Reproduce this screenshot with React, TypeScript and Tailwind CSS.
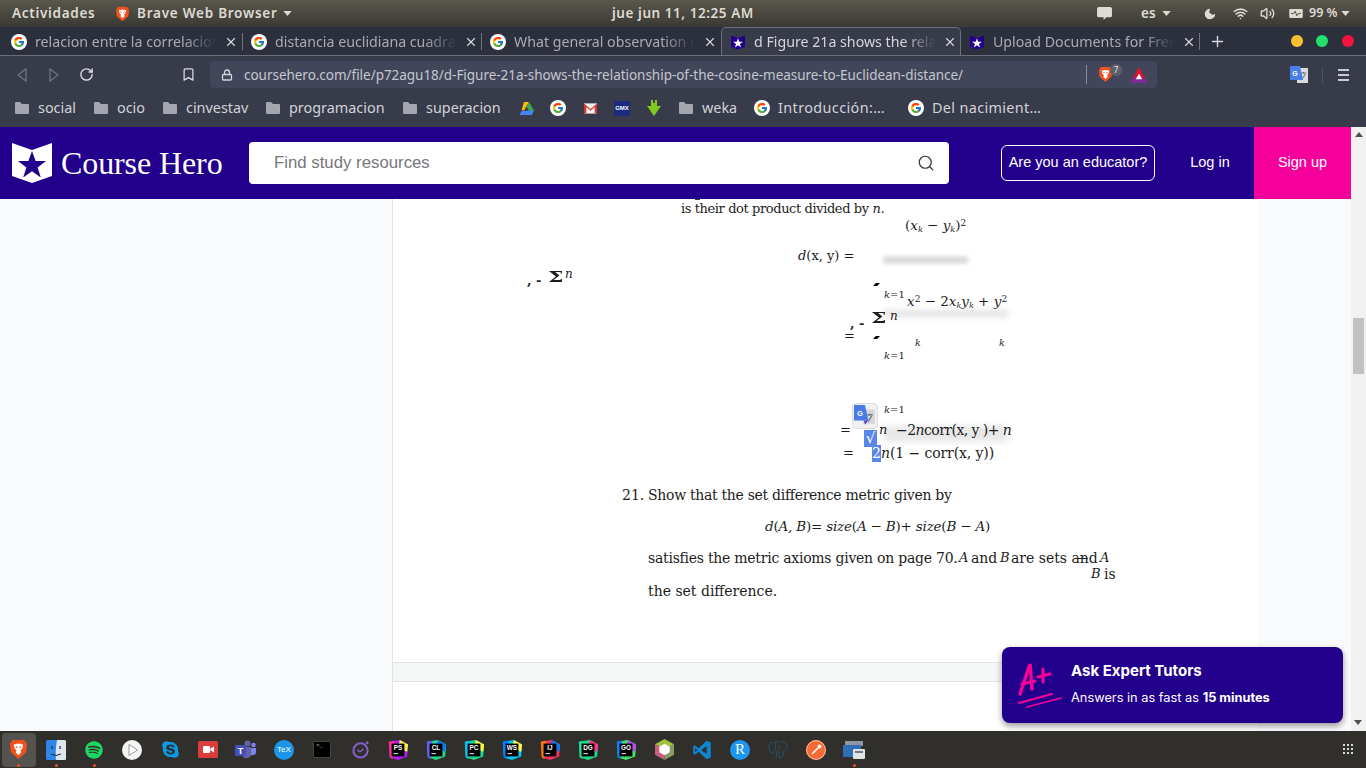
import { ReactNode } from 'react';
import { FcGoogle } from 'react-icons/fc';
import { FaSkype, FaSpotify } from 'react-icons/fa';
import {
  Bookmark,
  Lock,
  Moon,
  Plus,
  RotateCw,
  Search,
  Volume2,
  Wifi,
  X,
} from 'lucide-react';

const ui = "font-['Noto_Sans',sans-serif]";
const serif = "font-['DejaVu_Serif',serif]";

function GoogleIcon() {
  return (
    <span className="flex h-4 w-4 shrink-0 items-center justify-center rounded-full bg-white">
      <FcGoogle className="h-3 w-3" />
    </span>
  );
}

function ShieldMark({ className, star }: { className: string; star: string }) {
  return (
    <svg viewBox="0 0 40 40" className={className}>
      <path d="M0 0 L20 7 L40 0 V33 L20 40 L0 33 Z" fill="currentColor" />
      <path
        d="M20 8 L23.6 18 L34 18 L25.6 24.4 L28.8 34.5 L20 28.2 L11.2 34.5 L14.4 24.4 L6 18 L16.4 18 Z"
        fill={star}
      />
    </svg>
  );
}

function BraveIcon({ size }: { size: string }) {
  return (
    <svg viewBox="0 0 20 22" className={size}>
      <path d="M4 1 H16 L19 5 L18 14 L10 21 L2 14 L1 5 Z" fill="#f0521f" />
      <path
        d="M5 6 L8 5 H12 L15 6 L14 10 L12 12 L13 14 L10 17 L7 14 L8 12 L6 10 Z"
        fill="#fff"
      />
      <path d="M7 8 L9 9 M13 8 L11 9" stroke="#f0521f" strokeWidth="1.2" />
    </svg>
  );
}

function Folder() {
  return (
    <svg viewBox="0 0 14 12" className="h-3 w-3.5 shrink-0">
      <path d="M0 1 Q0 0 1 0 H5 L7 2 H13 Q14 2 14 3 V11 Q14 12 13 12 H1 Q0 12 0 11 Z" fill="#a3a6af" />
    </svg>
  );
}

function Tab({
  title,
  icon,
  w,
  active,
  sep,
}: {
  title: string;
  icon: ReactNode;
  w: string;
  active?: boolean;
  sep?: boolean;
}) {
  return (
    <div
      className={`relative flex h-full shrink-0 items-center pl-[8px] ${w} ${
        active
          ? 'z-10 -mb-px rounded-t-[5px] border border-b-0 border-[#6c6f7a] bg-[#383b4a] pt-[1px] text-[#d5d6da]'
          : 'pt-[2px] text-[#a9abb3]'
      }`}
    >
      <span className="flex w-[16px] shrink-0 justify-center">{icon}</span>
      <span className="ml-[8px] w-[187px] overflow-hidden whitespace-nowrap text-[14.2px] [mask-image:linear-gradient(to_right,black_80%,transparent_97%)]">
        {title}
      </span>
      <X className="ml-[2px] h-[14px] w-[14px] shrink-0 text-[#d5d6da]" strokeWidth={2} />
      {sep && <span className="absolute right-0 top-[6px] h-[17px] w-px bg-[#70727c]" />}
    </div>
  );
}

function Mark({ to, text }: { to: string; text: string }) {
  return (
    <div className={`flex shrink-0 items-center gap-[9px] ${to}`}>
      <Folder />
      <span className="whitespace-nowrap">{text}</span>
    </div>
  );
}

function BarIcon({ children, w }: { children: ReactNode; w: string }) {
  return <span className={`flex shrink-0 items-center justify-center ${w}`}>{children}</span>;
}

function Jet({ label, a, b, c }: { label: string; a: string; b: string; c: string }) {
  return (
    <svg viewBox="0 0 24 24" className="h-[22px] w-[22px]">
      <polygon points="2,3 14,1 23,6 22,19 12,23 3,20" fill={a} />
      <polygon points="14,1 23,6 22,14 12,10" fill={b} />
      <polygon points="2,3 8,2 6,22 3,20" fill={c} />
      <rect x="5" y="5" width="14" height="14" fill="#000" />
      <text x="12" y="12.5" textAnchor="middle" fontSize="7" fontWeight="700" fill="#fff" fontFamily="Liberation Sans">
        {label}
      </text>
      <rect x="7" y="15.5" width="5" height="1" fill="#fff" />
    </svg>
  );
}

const dockIcons: { key: string; dot?: boolean; node: ReactNode }[] = [
  { key: 'brave', dot: true, node: <BraveIcon size="h-[21px] w-[19px]" /> },
  {
    key: 'finder',
    dot: true,
    node: (
      <svg viewBox="0 0 20 20" className="h-[20px] w-[20px]">
        <rect width="20" height="20" rx="1.5" fill="#2f86e6" />
        <path d="M11 0 H18.5 Q20 0 20 1.5 V18.5 Q20 20 18.5 20 H10 Q9 12 11 0" fill="#dfe6ee" />
        <path d="M5 14 Q10 17 15 14" stroke="#1b2a44" fill="none" />
        <path d="M6 6 V9 M14 6 V9" stroke="#1b2a44" strokeWidth="1.2" />
      </svg>
    ),
  },
  { key: 'spotify', dot: true, node: <FaSpotify className="h-[18px] w-[18px] text-[#1ed760]" /> },
  {
    key: 'play',
    node: (
      <svg viewBox="0 0 20 20" className="h-[20px] w-[20px]">
        <circle cx="10" cy="10" r="10" fill="#f4f4f4" />
        <path d="M7 4.5 L15.5 10 L7 15.5 Z" fill="#fff" stroke="#9a9a9a" strokeWidth="1" />
      </svg>
    ),
  },
  {
    key: 'skype',
    node: <FaSkype className="h-[19px] w-[19px] text-[#0a9be6]" />,
  },
  {
    key: 'video',
    node: (
      <svg viewBox="0 0 20 17" className="h-[17px] w-[20px]">
        <rect width="20" height="17" rx="1.5" fill="#dd3c3c" />
        <rect x="5" y="5" width="7" height="7" rx="1" fill="#fff" />
        <path d="M12 8 L16 5.5 V11.5 L12 9 Z" fill="#fff" />
      </svg>
    ),
  },
  {
    key: 'teams',
    node: (
      <svg viewBox="0 0 22 20" className="h-[20px] w-[22px]">
        <circle cx="12.5" cy="3.5" r="3" fill="#6264a7" />
        <circle cx="18.5" cy="5" r="2.3" fill="#7b83eb" />
        <path d="M7 7 H16 V16 Q12 20 8 17 Z" fill="#6264a7" />
        <path d="M16 8 H21 V13 Q20 16 16 15 Z" fill="#7b83eb" />
        <rect x="0" y="5" width="11" height="11" rx="1" fill="#464eb8" />
        <text x="5.5" y="14" textAnchor="middle" fontSize="9" fontWeight="700" fill="#fff" fontFamily="Liberation Sans">
          T
        </text>
      </svg>
    ),
  },
  {
    key: 'tex',
    node: (
      <span className="flex h-[20px] w-[20px] items-center justify-center rounded-full bg-[#1e96e8] font-['Liberation_Sans',sans-serif] text-[8px] text-white">
        TeX
      </span>
    ),
  },
  {
    key: 'term',
    node: (
      <span className="flex h-[17px] w-[18px] items-start rounded-[1px] border border-[#444] bg-black pl-[2px] font-['Liberation_Mono',monospace] text-[6px] leading-[8px] text-[#ccc]">
        &gt;_
      </span>
    ),
  },
  {
    key: 'ring',
    node: (
      <svg viewBox="0 0 20 20" className="h-[19px] w-[19px]">
        <circle cx="10" cy="11" r="7.5" fill="none" stroke="#8360c9" strokeWidth="2.2" />
        <path d="M7 10 Q9 15 13 9" fill="none" stroke="#8360c9" strokeWidth="1.6" />
        <circle cx="17" cy="3" r="1.6" fill="#8360c9" />
      </svg>
    ),
  },
  { key: 'ps', node: <Jet label="PS" a="#af1df5" b="#fcf84a" c="#ff318c" /> },
  { key: 'cl', node: <Jet label="CL" a="#21d789" b="#087cfa" c="#6b57ff" /> },
  { key: 'pc', node: <Jet label="PC" a="#21d789" b="#fcf84a" c="#07c3f2" /> },
  { key: 'ws', node: <Jet label="WS" a="#07c3f2" b="#fcf84a" c="#087cfa" /> },
  { key: 'ij', node: <Jet label="IJ" a="#fe315d" b="#087cfa" c="#f97a12" /> },
  { key: 'dg', node: <Jet label="DG" a="#21d789" b="#ff318c" c="#22d88f" /> },
  { key: 'go', node: <Jet label="GO" a="#3bea62" b="#b74af7" c="#087cfa" /> },
  {
    key: 'cube',
    node: (
      <svg viewBox="0 0 20 22" className="h-[21px] w-[19px]">
        <polygon points="10,0 20,5.5 10,11 0,5.5" fill="#a2c13a" />
        <polygon points="0,5.5 10,11 10,22 0,16.5" fill="#c85f7f" />
        <polygon points="20,5.5 10,11 10,22 20,16.5" fill="#8a9b6a" />
        <polygon points="10,5 15.5,8 15.5,14 10,17 4.5,14 4.5,8" fill="#fff" />
      </svg>
    ),
  },
  {
    key: 'vscode',
    node: (
      <svg viewBox="0 0 24 24" className="h-[20px] w-[20px]">
        <path
          d="M17.6 1 L8 10 L3.5 6.4 L1.5 7.4 V16.6 L3.5 17.6 L8 14 L17.6 23 L22.5 21 V3 Z M17.6 7.2 V16.8 L11 12 Z M3.8 9.4 L6.2 12 L3.8 14.6 Z"
          fill="#0f86d0"
          fillRule="evenodd"
        />
      </svg>
    ),
  },
  {
    key: 'r',
    node: (
      <span className="flex h-[20px] w-[20px] items-center justify-center rounded-full bg-[#1e96f0] font-['Liberation_Serif',serif] text-[15px] leading-none text-white">
        R
      </span>
    ),
  },
  {
    key: 'pg',
    node: (
      <svg viewBox="0 0 20 20" className="h-[20px] w-[20px]" fill="none" stroke="#2a5674" strokeWidth="0.9">
        <path d="M5 2 Q1 2 1 6 Q1 11 4 14 Q6 13 6 10 M6 3 Q9 1 12 2 M13 2 Q19 1 19 6 Q19 10 15 12 V16 Q13 19 11 17 V11" />
        <path d="M8 3 Q6 7 8 10 Q9 14 8 18 M12 5 Q10 7 11 10" />
      </svg>
    ),
  },
  {
    key: 'postman',
    node: (
      <svg viewBox="0 0 20 20" className="h-[20px] w-[20px]">
        <circle cx="10" cy="10" r="10" fill="#f76935" />
        <circle cx="10" cy="10" r="9.4" fill="none" stroke="#f7d3c0" strokeWidth="0.8" />
        <path d="M6 14 L12 8" stroke="#fff" strokeWidth="1.6" />
        <circle cx="13.5" cy="6.5" r="2" fill="#fff" />
      </svg>
    ),
  },
  {
    key: 'files',
    dot: true,
    node: (
      <svg viewBox="0 0 22 20" className="h-[20px] w-[22px]">
        <rect x="2" y="1" width="18" height="5" fill="#8d97a3" />
        <rect x="0" y="5" width="18" height="12" rx="1" fill="#2e6fb7" />
        <rect x="10" y="9" width="12" height="10" rx="1" fill="#dfe3e6" />
        <rect x="12" y="11" width="8" height="2" fill="#6f7880" />
      </svg>
    ),
  },
];

function T({ c, children }: { c: string; children: ReactNode }) {
  return <div className={`absolute whitespace-nowrap leading-4 ${c}`}>{children}</div>;
}

function Sigma({ c }: { c: string }) {
  return <T c={`origin-left scale-x-[1.45] text-[15px] font-bold ${c}`}>Σ</T>;
}

function Tick({ c }: { c: string }) {
  return <span className={`absolute h-[3px] w-[7px] bg-black [clip-path:polygon(40%_0,100%_0,60%_100%,0_100%)] ${c}`} />;
}

export default function App() {
  return (
    <div className="relative flex h-[768px] w-[1366px] flex-col overflow-hidden bg-white">
      {/* Ubuntu top bar */}
      <div className={`flex h-[27px] shrink-0 items-center bg-gradient-to-b from-[#5a574d] to-[#3a3934] text-[13.5px] font-semibold text-[#dedbd2] ${ui}`}>
        <span className="ml-3 w-[103px] tracking-[0.7px]">Actividades</span>
        <BraveIcon size="h-[16px] w-[15px]" />
        <span className="ml-[7px] w-[146px] whitespace-nowrap tracking-[0.75px]">Brave Web Browser</span>
        <svg viewBox="0 0 10 6" className="h-[5px] w-[9px]"><path d="M0 0 H10 L5 6 Z" fill="#dedbd2" /></svg>
        <span className="ml-[320px] w-[482px] tracking-[0.55px]">jue jun 11, 12:25 AM</span>
        <svg viewBox="0 0 16 15" className="ml-[3px] h-[14px] w-[15px]">
          <path d="M2 0 H14 Q16 0 16 2 V9 Q16 11 14 11 H10 L7 14 V11 H2 Q0 11 0 9 V2 Q0 0 2 0" fill="#dedbd2" />
        </svg>
        <span className="ml-[29px] w-[21px]">es</span>
        <svg viewBox="0 0 10 6" className="h-[5px] w-[9px]"><path d="M0 0 H10 L5 6 Z" fill="#dedbd2" /></svg>
        <Moon className="ml-[32px] h-[14px] w-[14px]" fill="#dedbd2" strokeWidth={0} />
        <Wifi className="ml-[16px] h-[15px] w-[15px]" strokeWidth={2.6} />
        <Volume2 className="ml-[12px] h-[15px] w-[15px]" strokeWidth={2.2} />
        <svg viewBox="0 0 15 10" className="ml-[14px] h-[9px] w-[14px]">
          <rect width="15" height="10" rx="1.5" fill="#dedbd2" />
          <path d="M2 5 H5 L6.5 2.5 L8.5 7.5 L10 5 H13" stroke="#45443e" fill="none" />
        </svg>
        <span className="ml-[6px] w-[32px] whitespace-nowrap text-[12.5px]">99 %</span>
        <svg viewBox="0 0 10 6" className="h-[5px] w-[9px]"><path d="M0 0 H10 L5 6 Z" fill="#dedbd2" /></svg>
      </div>

      {/* Tab strip */}
      <div className={`relative flex h-[29px] shrink-0 items-stretch border-b border-[#6c6f7a] bg-[#2c303d] pl-[3px] ${ui}`}>
        <Tab w="w-[240px]" title="relacion entre la correlacion" icon={<GoogleIcon />} sep />
        <Tab w="w-[239px]" title="distancia euclidiana cuadrada" icon={<GoogleIcon />} sep />
        <Tab w="w-[239px]" title="What general observation can" icon={<GoogleIcon />} />
        <Tab
          w="w-[240px]"
          title="d Figure 21a shows the relationship"
          active
          icon={<ShieldMark className="h-[15px] w-[14px] text-[#22008b]" star="#fff" />}
        />
        <Tab
          w="w-[239px]"
          title="Upload Documents for Free"
          sep
          icon={<ShieldMark className="h-[15px] w-[14px] text-[#22008b]" star="#fff" />}
        />
        <Plus className="ml-[9px] h-[17px] w-[17px] self-center text-[#d5d6da]" strokeWidth={2} />
        <span className="ml-[65px] h-3 w-3 self-center rounded-full bg-[#fbc02d]" />
        <span className="ml-[13px] h-3 w-3 self-center rounded-full bg-[#1fe36b]" />
        <span className="ml-[14px] h-3 w-3 self-center rounded-full bg-[#f5133f]" />
      </div>

      {/* Toolbar */}
      <div className={`flex h-[37px] shrink-0 items-center bg-[#383b4a] ${ui}`}>
        <svg viewBox="0 0 10 14" className="ml-[17px] h-[14px] w-[10px]" fill="none" stroke="#6f7280" strokeWidth="1.3">
          <path d="M9 1 V13 L1 7 Z" />
        </svg>
        <svg viewBox="0 0 10 14" className="ml-[22px] h-[14px] w-[10px]" fill="none" stroke="#6f7280" strokeWidth="1.3">
          <path d="M1 1 V13 L9 7 Z" />
        </svg>
        <RotateCw className="ml-[20px] h-[15px] w-[15px] text-[#dcdde1]" strokeWidth={2.2} />
        <Bookmark className="ml-[87px] h-[15px] w-[15px] text-[#dcdde1]" strokeWidth={2} />
        <div className="ml-[14px] flex h-[27px] w-[947px] items-center rounded-[4px] bg-[#42465a]">
          <Lock className="ml-[11px] h-[12px] w-[12px] text-[#d5d6da]" strokeWidth={2.6} />
          <span className="ml-[11px] w-[842px] whitespace-nowrap pt-[2px] text-[13.5px] tracking-[-0.03px] text-[#c5c7ce]">
            coursehero.com/file/p72agu18/d-Figure-21a-shows-the-relationship-of-the-cosine-measure-to-Euclidean-distance/
          </span>
          <span className="h-[19px] w-px bg-[#8c8e98]" />
          <span className="relative ml-[11px] flex">
            <BraveIcon size="h-[17px] w-[15px]" />
            <span className="absolute -right-[9px] -top-[2px] flex h-[12px] w-[12px] items-center justify-center rounded-full bg-[#5d5f6c] text-[8px] text-[#e6e6e6]">
              7
            </span>
          </span>
          <svg viewBox="0 0 16 15" className="ml-[17px] h-[16px] w-[18px]">
            <polygon points="8,0 16,15 0,15" fill="#e01030" />
            <polygon points="0,15 16,15 12.5,10 3.5,10" fill="#7c2a9c" />
            <polygon points="8,6 11,11.5 5,11.5" fill="#fff" />
          </svg>
        </div>
        <svg viewBox="0 0 18 17" className="ml-[133px] h-[17px] w-[18px]">
          <rect x="7" y="2" width="11" height="15" fill="#d9dbde" />
          <path d="M11 7 H16 M13.5 6 V7 M12 13 L15.5 8" stroke="#666" />
          <polygon points="0,0 10,0 13,14 0,14" fill="#4b7fe8" />
          <text x="5" y="10" textAnchor="middle" fontSize="7" fontWeight="700" fill="#fff" fontFamily="Liberation Sans">
            G
          </text>
        </svg>
        <span className="ml-[14px] h-[16px] w-px bg-[#50535f]" />
        <div className="ml-[15px] flex w-[11px] flex-col gap-[3px]">
          <span className="h-[2px] bg-[#c9cad0]" />
          <span className="h-[2px] bg-[#c9cad0]" />
          <span className="h-[2px] bg-[#c9cad0]" />
        </div>
      </div>

      {/* Bookmarks */}
      <div className={`flex h-[34px] shrink-0 items-center bg-[#383b4a] pb-[4px] pl-[15px] text-[14.4px] text-[#d2d3d8] ${ui}`}>
        <Mark to="w-[79px]" text="social" />
        <Mark to="w-[69px]" text="ocio" />
        <Mark to="w-[103px]" text="cinvestav" />
        <Mark to="w-[137px]" text="programacion" />
        <Mark to="w-[115px]" text="superacion" />
        <BarIcon w="w-[16px]">
          <svg viewBox="0 0 16 14" className="h-[13px] w-[15px]">
            <polygon points="5.3,0 10.7,0 5.5,9 2.7,9" fill="#fbbc04" />
            <polygon points="10.7,0 16,9.2 13.3,14 8,5" fill="#34a853" />
            <polygon points="3,9.4 16,9.4 13.3,14 0.4,14" fill="#4285f4" />
          </svg>
        </BarIcon>
        <BarIcon w="w-[48px]"><GoogleIcon /></BarIcon>
        <BarIcon w="w-[16px]">
          <svg viewBox="0 0 14 11" className="h-[11px] w-[13px]">
            <rect width="14" height="11" fill="#f2f2f2" />
            <path d="M0 0 L7 6 L14 0 V11 H11.5 V4 L7 8 L2.5 4 V11 H0 Z" fill="#d9362b" />
          </svg>
        </BarIcon>
        <BarIcon w="w-[48px]">
          <span className="flex h-[15px] w-[16px] items-center justify-center bg-[#1c2a80] font-['Liberation_Sans',sans-serif] text-[6px] font-bold text-white">
            GMX
          </span>
        </BarIcon>
        <BarIcon w="w-[16px]">
          <svg viewBox="0 0 14 16" className="h-[16px] w-[14px]">
            <path d="M4 0 H6 V3 H8 V0 H10 V6 H14 L7 16 L0 6 H4 Z" fill="#82c91e" />
          </svg>
        </BarIcon>
        <div className="ml-[17px] flex w-[75px] shrink-0 items-center gap-[9px]">
          <Folder />
          <span>weka</span>
        </div>
        <GoogleIcon />
        <span className="ml-[8px] w-[130px] shrink-0 whitespace-nowrap tracking-[0.4px]">Introducción:…</span>
        <GoogleIcon />
        <span className="ml-[8px] whitespace-nowrap tracking-[0.35px]">Del nacimient…</span>
      </div>

      {/* Course Hero header */}
      <div className="flex h-[72px] shrink-0 bg-[#f1f1f1] font-['Liberation_Sans',sans-serif]">
        <div className="flex w-[1351px] shrink-0 items-center bg-[#22008b]">
          <ShieldMark className="ml-3 h-10 w-10 text-white" star="#22008b" />
          <span className="ml-[9px] w-[188px] font-['Liberation_Serif',serif] text-[32px] leading-none tracking-[-0.1px] text-white">
            Course Hero
          </span>
          <div className="flex h-[42px] w-[700px] items-center justify-between rounded-[4px] bg-white pl-[25px] pr-[14px]">
            <span className="text-[16.8px] text-[#77777c]">Find study resources</span>
            <Search className="h-[18px] w-[18px] text-[#33333d]" strokeWidth={1.6} />
          </div>
          <button className="ml-[52px] flex h-9 w-[154px] items-center justify-center rounded-md border border-white text-[14.5px] text-white">
            Are you an educator?
          </button>
          <span className="w-[99px] pl-[11px] text-center text-[14.5px] text-white">Log in</span>
          <span className="flex h-full flex-1 items-center justify-center bg-[#f5009a] text-[14.5px] text-white">
            Sign up
          </span>
        </div>
        <div className="flex flex-1 justify-center pt-[5px]">
          <svg viewBox="0 0 8 5" className="h-[5px] w-[8px]"><path d="M4 0 L8 5 H0 Z" fill="#505050" /></svg>
        </div>
      </div>

      {/* Page */}
      <div className="flex min-h-0 flex-1">
        <div className="w-[392px] shrink-0 bg-[#f9fafc]" />
        <div className="flex w-[866px] shrink-0 flex-col border-l border-[#e2e3e5] bg-[#f5f6f6]">
          <div className={`relative h-[464px] shrink-0 overflow-hidden border-b border-[#e2e3e5] bg-white text-[#1c1c1c] ${serif}`}>
            <span className="absolute left-[302px] -top-[1px] h-[2px] w-[5px] bg-[#333]" />
            <T c="left-[288px] top-[2px] text-[13px] tracking-[-0.4px]">is their dot product divided by <i>n</i>.</T>
            <T c="left-[512px] top-[18px] text-[13.5px]">(<i>x<sub className="text-[8px]">k</sub></i> − <i>y<sub className="text-[8px]">k</sub></i>)<sup className="text-[9px]">2</sup></T>
            <T c="left-[405px] top-[49px] text-[13px]"><i>d</i>(x, y) =</T>
            <div className="absolute left-[490px] top-[58px] h-[6px] w-[85px] bg-[#d0d0d0] blur-[2.5px]" />

            <T c="left-[134px] top-[74px] text-[13px] font-bold">, -</T>
            <Sigma c="left-[155px] top-[70px]" />
            <T c="left-[172px] top-[67px] text-[12px] italic">n</T>

            <Tick c="left-[480px] top-[84px]" />
            <T c="left-[491px] top-[88px] text-[10px]"><i>k</i>=1</T>
            <T c="left-[514px] top-[94px] text-[13.5px]"><i>x</i><sup className="text-[9px]">2</sup> − 2<i>x<sub className="text-[8px]">k</sub>y<sub className="text-[8px]">k</sub></i> + <i>y</i><sup className="text-[9px]">2</sup></T>
            <div className="absolute left-[490px] top-[111px] h-[7px] w-[125px] bg-[#e2e2e2] blur-[3px]" />
            <T c="left-[457px] top-[117px] text-[13px] font-bold">, -</T>
            <Sigma c="left-[478px] top-[111px]" />
            <T c="left-[497px] top-[109px] text-[12px] italic">n</T>
            <T c="left-[451px] top-[129px] text-[13px]">=</T>
            <Tick c="left-[480px] top-[137px]" />
            <T c="left-[522px] top-[136px] text-[9.5px] italic">k</T>
            <T c="left-[606px] top-[136px] text-[9.5px] italic">k</T>
            <T c="left-[491px] top-[149px] text-[10px]"><i>k</i>=1</T>

            <T c="left-[491px] top-[203px] text-[10px]"><i>k</i>=1</T>
            <div className="absolute left-[490px] top-[227px] h-[16px] w-[125px] bg-[#e8e8e8] blur-[3px]" />
            <T c="left-[447px] top-[223px] text-[13px]">=</T>
            <span className="absolute left-[471px] top-[231px] flex h-[17px] w-[13px] items-center justify-center bg-[#5a86e8] text-[15px] text-white">√</span>
            <T c="left-[486px] top-[223px] text-[13px] italic">n</T>
            <T c="left-[503px] top-[223px] text-[14px] tracking-[-0.55px]">−2<i>n</i>corr(x, y )+ <i>n</i></T>
            <T c="left-[450px] top-[246px] text-[13px]">=</T>
            <span className="absolute left-[479px] top-[246px] flex h-[17px] w-[9px] items-center justify-center bg-[#5a86e8] text-[14px] text-white">2</span>
            <T c="left-[488px] top-[246px] text-[14px] tracking-[-0.1px]"><i>n</i>(1 − corr(x, y))</T>

            <T c="left-[229px] top-[288px] text-[14px]">21.</T>
            <T c="left-[255px] top-[288px] text-[14px] tracking-[-0.3px]">Show that the set difference metric given by</T>
            <T c="left-[372px] top-[319px] text-[13.5px] tracking-[-0.2px]"><i>d</i>(<i>A, B</i>)= <i>size</i>(<i>A</i> − <i>B</i>)+ <i>size</i>(<i>B</i> − <i>A</i>)</T>
            <T c="left-[255px] top-[351px] text-[14px] tracking-[-0.25px]">satisfies the metric axioms given on page 70.</T>
            <T c="left-[566px] top-[351px] text-[13px] italic">A</T>
            <T c="left-[578px] top-[351px] text-[14px]">and</T>
            <T c="left-[607px] top-[351px] text-[13px] italic">B</T>
            <T c="left-[618px] top-[351px] text-[14px]">are sets and</T>
            <span className="absolute left-[685px] top-[359px] h-px w-[10px] bg-[#222]" />
            <T c="left-[707px] top-[351px] text-[13px] italic">A</T>
            <T c="left-[698px] top-[367px] text-[13px] italic">B</T>
            <T c="left-[711px] top-[367px] text-[14px]">is</T>
            <T c="left-[255px] top-[384px] text-[14px]">the set difference.</T>

            {/* translate bubble */}
            <div className="absolute left-[459px] top-[204px] flex h-[26px] w-[26px] items-center justify-center rounded-[4px] border border-[#dcdcdc] bg-[#f1f1f3]">
              <svg viewBox="0 0 20 20" className="h-[22px] w-[22px]">
                <rect x="8" y="4" width="11" height="13" fill="#d5d7da" />
                <path d="M12 9 H17 M14.5 8 V9 M13 15 L16 10" stroke="#666" />
                <polygon points="0,0 10,0 13,14 0,14" fill="#4a7ae6" />
                <polygon points="9,14 13,14 10,18" fill="#5b3bd0" />
                <text x="5.5" y="10" textAnchor="middle" fontSize="7" fontWeight="700" fill="#fff" fontFamily="Liberation Sans">
                  G
                </text>
              </svg>
            </div>
          </div>
          <div className="h-[18px] shrink-0" />
          <div className="flex-1 border-t border-[#e2e3e5] bg-white" />
        </div>
        <div className="w-[93px] shrink-0 bg-[#f9fafc]" />
        <div className="relative w-[15px] shrink-0 bg-[#f1f1f1]">
          <svg viewBox="0 0 8 5" className="absolute bottom-[6px] left-[3px] h-[5px] w-[8px]"><path d="M0 0 H8 L4 5 Z" fill="#505050" /></svg>
          <div className="absolute left-[2px] top-[119px] h-[56px] w-[11px] bg-[#c1c1c1]" />
        </div>
      </div>

      {/* Dock */}
      <div className="relative flex h-[37px] shrink-0 items-center bg-[#302f2b]">
        <div className="-ml-px flex">
          {dockIcons.map((item, i) => (
            <div key={item.key} className="relative flex h-[34px] w-[38px] shrink-0 items-center justify-center">
              {i === 0 && <span className="absolute inset-y-0 left-[3px] w-[34px] rounded-[4px] bg-[#55534e]" />}
              <span className="relative flex">{item.node}</span>
              {item.dot && <span className="absolute bottom-0 left-[18px] h-[3px] w-[3px] rounded-full bg-[#e9541f]" />}
            </div>
          ))}
        </div>
        <div className="absolute right-[13px] top-[13px] grid grid-cols-3 gap-[2px]">
          {Array.from({ length: 9 }).map((_, i) => (
            <span key={i} className="h-[2px] w-[2px] bg-[#d8d8d4]" />
          ))}
        </div>
      </div>

      {/* Tutor popup */}
      <div className="absolute left-[1002px] top-[647px] flex h-[76px] w-[341px] items-center rounded-lg bg-[#22008b] font-['Inter',sans-serif] text-white shadow-[0_3px_6px_rgba(0,0,0,0.4)]">
        <svg viewBox="0 0 46 46" className="ml-[15px] h-[46px] w-[46px]" fill="none" stroke="#f5009a" strokeLinecap="round">
          <path d="M3 32 L13 2 L15 27" strokeWidth="3.4" />
          <path d="M5 22 L18 19" strokeWidth="3" />
          <path d="M21 15 L33 12 M26 7 L26 20" strokeWidth="3" />
          <path d="M2 41 L35 32" strokeWidth="2.2" />
          <path d="M10 45 L44 36" strokeWidth="1.8" />
        </svg>
        <div className="ml-[8px] pb-[3px]">
          <div className="text-[15px] font-bold leading-[18px]">Ask Expert Tutors</div>
          <div className="mt-[10px] text-[12.8px] leading-4">
            Answers in as fast as <b className="font-bold">15 minutes</b>
          </div>
        </div>
      </div>
    </div>
  );
}
